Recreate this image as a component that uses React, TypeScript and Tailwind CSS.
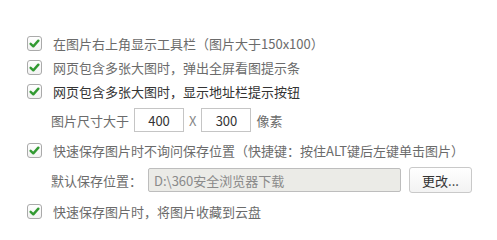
import React from 'react'

const FONT = { fontFamily: '"Noto Sans CJK SC", "Noto Sans", sans-serif' }

function Check() {
  return (
    <span className="flex h-[15px] w-[15px] shrink-0 items-center justify-center rounded-[3px] border border-[#aaa] bg-gradient-to-b from-white to-[#f2f2f2]">
      <svg viewBox="0 0 12 12" className="h-[11px] w-[11px]">
        <path d="M1.8 6.3 L4.7 9.1 L10.2 2.9" fill="none" stroke="#329a32" strokeWidth="2.6" strokeLinecap="round" strokeLinejoin="round" />
      </svg>
    </span>
  )
}

function CheckRow({ label, dark }: { label: string; dark?: boolean }) {
  return (
    <div className="flex h-6 items-center gap-[11px]">
      <Check />
      <span className={dark ? 'text-[#333]' : 'text-[#6b6b6b]'}>{label}</span>
    </div>
  )
}

export default function App() {
  return (
    <div className="h-[240px] w-[497px] bg-white pl-[27px] pt-[31px] text-[13px] leading-none" style={FONT}>
      <CheckRow label="在图片右上角显示工具栏（图片大于150x100）" />
      <CheckRow label="网页包含多张大图时，弹出全屏看图提示条" />
      <CheckRow label="网页包含多张大图时，显示地址栏提示按钮" dark />

      <div className="mt-[5px] flex h-6 items-center pl-[24px] text-[#6b6b6b]">
        <span>图片尺寸大于</span>
        <div className="ml-[5px] flex h-[24px] w-[50px] items-center justify-center border border-[#c5c5c5] bg-white text-[#333]">400</div>
        <span className="mx-[5px] text-[#888]">X</span>
        <div className="flex h-[24px] w-[50px] items-center justify-center border border-[#c5c5c5] bg-white text-[#333]">300</div>
        <span className="ml-[5px]">像素</span>
      </div>

      <div className="mt-[6px]">
        <CheckRow label="快速保存图片时不询问保存位置（快捷键：按住ALT键后左键单击图片）" />
      </div>

      <div className="mt-[5px] flex h-[26px] items-center pl-[24px] text-[#6b6b6b]">
        <span className="w-[97px]">默认保存位置：</span>
        <div className="flex h-[24px] w-[253px] items-center rounded-[2px] border border-[#bdbdbd] bg-[#ebebe7] pl-[5px] text-[#8a8a8a]">
          D:\360安全浏览器下载
        </div>
        <button className="ml-[8px] flex h-[26px] w-[63px] items-center justify-center rounded-[3px] border border-[#c9c9c9] bg-gradient-to-b from-white to-[#f3f3f3] text-[#333]">
          更改...
        </button>
      </div>

      <div className="mt-[6px]">
        <CheckRow label="快速保存图片时，将图片收藏到云盘" />
      </div>
    </div>
  )
}
